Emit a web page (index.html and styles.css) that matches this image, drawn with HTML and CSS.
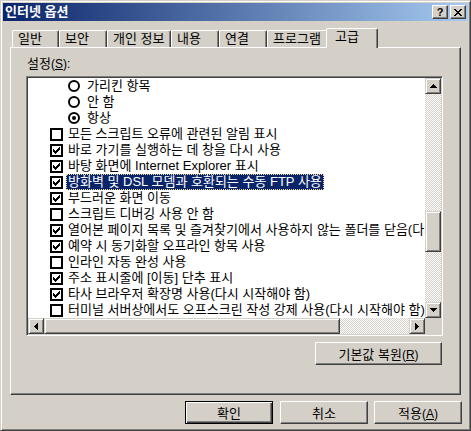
FILE: index.html
```html
<!DOCTYPE html>
<html lang="ko">
<head>
<meta charset="utf-8">
<title>인터넷 옵션</title>
<link rel="stylesheet" href="styles.css">
</head>
<body>
<div class="window">
  <div class="titlebar">
    <span class="title">인터넷 옵션</span>
    <div class="caption-buttons">
      <span class="cap-btn help">?</span>
      <span class="cap-btn close"><svg width="8" height="7" viewBox="0 0 8 7" shape-rendering="crispEdges"><path d="M0 0h2v1h-2zM6 0h2v1h-2zM1 1h2v1h-2zM5 1h2v1h-2zM2 2h4v1h-4zM3 3h2v1h-2zM2 4h4v1h-4zM1 5h2v1h-2zM5 5h2v1h-2zM0 6h2v1h-2zM6 6h2v1h-2z"/></svg></span>
    </div>
  </div>
  <div class="client">
    <div class="tabs">
      <div class="tab t1">일반</div>
      <div class="tab t2">보안</div>
      <div class="tab t3">개인 정보</div>
      <div class="tab t4">내용</div>
      <div class="tab t5">연결</div>
      <div class="tab t6">프로그램</div>
      <div class="tab t7 active">고급</div>
    </div>
    <div class="panel">
      <div class="label">설정<span class="lat">(<u>S</u>):</span></div>
      <div class="listbox">
        <div class="items">
          <div class="row radio-row"><svg class="radio" width="12" height="12" viewBox="0 0 12 12"><circle cx="6" cy="6" r="5" fill="#fff" stroke="#000" stroke-width="2"/></svg><span class="text">가리킨 항목</span></div>
          <div class="row radio-row"><svg class="radio" width="12" height="12" viewBox="0 0 12 12"><circle cx="6" cy="6" r="5" fill="#fff" stroke="#000" stroke-width="2"/></svg><span class="text">안 함</span></div>
          <div class="row radio-row"><svg class="radio" width="12" height="12" viewBox="0 0 12 12"><circle cx="6" cy="6" r="5" fill="#fff" stroke="#000" stroke-width="2"/><circle cx="6" cy="6" r="2" fill="#000"/></svg><span class="text">항상</span></div>
          <div class="row cb-row"><span class="cb"></span><span class="text">모든 스크립트 오류에 관련된 알림 표시</span></div>
          <div class="row cb-row"><span class="cb"><svg width="7" height="7" viewBox="0 0 7 7" shape-rendering="crispEdges"><path d="M0 2h1v3h-1zM1 3h1v3h-1zM2 4h1v3h-1zM3 3h1v3h-1zM4 2h1v3h-1zM5 1h1v3h-1zM6 0h1v3h-1z"/></svg></span><span class="text">바로 가기를 실행하는 데 창을 다시 사용</span></div>
          <div class="row cb-row"><span class="cb"><svg width="7" height="7" viewBox="0 0 7 7" shape-rendering="crispEdges"><path d="M0 2h1v3h-1zM1 3h1v3h-1zM2 4h1v3h-1zM3 3h1v3h-1zM4 2h1v3h-1zM5 1h1v3h-1zM6 0h1v3h-1z"/></svg></span><span class="text">바탕 화면에 Internet Explorer 표시</span></div>
          <div class="row cb-row selected"><span class="cb"><svg width="7" height="7" viewBox="0 0 7 7" shape-rendering="crispEdges"><path d="M0 2h1v3h-1zM1 3h1v3h-1zM2 4h1v3h-1zM3 3h1v3h-1zM4 2h1v3h-1zM5 1h1v3h-1zM6 0h1v3h-1z"/></svg></span><span class="text">방화벽 및 DSL 모뎀과 호환되는 수동 FTP 사용</span></div>
          <div class="row cb-row"><span class="cb"><svg width="7" height="7" viewBox="0 0 7 7" shape-rendering="crispEdges"><path d="M0 2h1v3h-1zM1 3h1v3h-1zM2 4h1v3h-1zM3 3h1v3h-1zM4 2h1v3h-1zM5 1h1v3h-1zM6 0h1v3h-1z"/></svg></span><span class="text">부드러운 화면 이동</span></div>
          <div class="row cb-row"><span class="cb"></span><span class="text">스크립트 디버깅 사용 안 함</span></div>
          <div class="row cb-row"><span class="cb"><svg width="7" height="7" viewBox="0 0 7 7" shape-rendering="crispEdges"><path d="M0 2h1v3h-1zM1 3h1v3h-1zM2 4h1v3h-1zM3 3h1v3h-1zM4 2h1v3h-1zM5 1h1v3h-1zM6 0h1v3h-1z"/></svg></span><span class="text">열어본 페이지 목록 및 즐겨찾기에서 사용하지 않는 폴더를 닫음(다시 시작해야 함)</span></div>
          <div class="row cb-row"><span class="cb"><svg width="7" height="7" viewBox="0 0 7 7" shape-rendering="crispEdges"><path d="M0 2h1v3h-1zM1 3h1v3h-1zM2 4h1v3h-1zM3 3h1v3h-1zM4 2h1v3h-1zM5 1h1v3h-1zM6 0h1v3h-1z"/></svg></span><span class="text">예약 시 동기화할 오프라인 항목 사용</span></div>
          <div class="row cb-row"><span class="cb"></span><span class="text">인라인 자동 완성 사용</span></div>
          <div class="row cb-row"><span class="cb"><svg width="7" height="7" viewBox="0 0 7 7" shape-rendering="crispEdges"><path d="M0 2h1v3h-1zM1 3h1v3h-1zM2 4h1v3h-1zM3 3h1v3h-1zM4 2h1v3h-1zM5 1h1v3h-1zM6 0h1v3h-1z"/></svg></span><span class="text">주소 표시줄에 [이동] 단추 표시</span></div>
          <div class="row cb-row"><span class="cb"><svg width="7" height="7" viewBox="0 0 7 7" shape-rendering="crispEdges"><path d="M0 2h1v3h-1zM1 3h1v3h-1zM2 4h1v3h-1zM3 3h1v3h-1zM4 2h1v3h-1zM5 1h1v3h-1zM6 0h1v3h-1z"/></svg></span><span class="text">타사 브라우저 확장명 사용(다시 시작해야 함)</span></div>
          <div class="row cb-row"><span class="cb"></span><span class="text">터미널 서버상에서도 오프스크린 작성 강제 사용(다시 시작해야 함)</span></div>
        </div>
        <div class="vscroll">
          <span class="sbtn"><svg width="7" height="4" viewBox="0 0 7 4" shape-rendering="crispEdges"><path d="M3 0h1v1h-1zM2 1h3v1h-3zM1 2h5v1h-5zM0 3h7v1h-7z"/></svg></span>
          <div class="track vtrack"><div class="thumb vthumb"></div></div>
          <span class="sbtn"><svg width="7" height="4" viewBox="0 0 7 4" shape-rendering="crispEdges"><path d="M0 0h7v1h-7zM1 1h5v1h-5zM2 2h3v1h-3zM3 3h1v1h-1z"/></svg></span>
        </div>
        <div class="hscroll">
          <span class="sbtn"><svg width="4" height="7" viewBox="0 0 4 7" shape-rendering="crispEdges"><path d="M0 3h1v1h-1zM1 2h1v3h-1zM2 1h1v5h-1zM3 0h1v7h-1z"/></svg></span>
          <div class="track htrack"><div class="thumb hthumb"></div></div>
          <span class="sbtn"><svg width="4" height="7" viewBox="0 0 4 7" shape-rendering="crispEdges"><path d="M0 0h1v7h-1zM1 1h1v5h-1zM2 2h1v3h-1zM3 3h1v1h-1z"/></svg></span>
        </div>
        <div class="corner"></div>
      </div>
      <div class="restore-row"><button class="btn restore">기본값 복원<span class="lat">(<u>R</u>)</span></button></div>
    </div>
    <div class="dialog-buttons">
      <button class="btn dlg default">확인</button>
      <button class="btn dlg">취소</button>
      <button class="btn dlg">적용<span class="lat">(<u>A</u>)</span></button>
    </div>
  </div>
</div>
</body>
</html>
```
FILE: styles.css
```css
* { box-sizing: border-box; }

body {
  margin: 0;
  background: #d4d0c8;
  font-family: "Liberation Sans", "Noto Sans CJK KR", sans-serif;
  font-size: 13px;
  color: #000;
}

.lat { font-size: 12px; }

.window {
  width: 471px;
  height: 431px;
  border: 1px solid;
  border-color: #d4d0c8 #404040 #404040 #d4d0c8;
  box-shadow: inset 1px 1px #fff, inset -1px -1px #808080;
  padding: 2px;
  display: flex;
  flex-direction: column;
  overflow: hidden;
  background: #d4d0c8;
}

.titlebar {
  flex: none;
  height: 18px;
  background: linear-gradient(to right, #0a246a, #a6caf0);
  display: flex;
  align-items: center;
  justify-content: space-between;
  padding: 0 2px;
}

.title {
  color: #fff;
  font-weight: bold;
  line-height: 16px;
}

.caption-buttons {
  display: flex;
  gap: 2px;
}

.cap-btn {
  width: 16px;
  height: 14px;
  background: #d4d0c8;
  border: 1px solid;
  border-color: #fff #404040 #404040 #fff;
  box-shadow: inset -1px -1px #808080;
  display: flex;
  align-items: center;
  justify-content: center;
}

.help {
  font-family: "Liberation Sans", sans-serif;
  font-weight: bold;
  font-size: 11px;
  line-height: 12px;
}

.client {
  flex: 1;
  display: flex;
  flex-direction: column;
  padding: 7px 7px 0 7px;
}

.tabs {
  flex: none;
  display: flex;
  align-items: flex-end;
  height: 20px;
  margin-left: 2px;
  margin-bottom: -1px;
}

.tab {
  flex: none;
  height: 17px;
  margin-bottom: 1px;
  border-top: 1px solid #fff;
  border-left: 1px solid #fff;
  border-right: 1px solid #404040;
  box-shadow: inset -1px 0 #808080;
  border-radius: 2px 2px 0 0;
  padding-left: 5px;
  line-height: 16px;
  white-space: nowrap;
  background: #d4d0c8;
}

.t1 { width: 47px; }
.t2 { width: 48px; }
.t3 { width: 64px; }
.t4 { width: 48px; }
.t5 { width: 48px; }
.t6 { width: 61px; }
.t7 { width: 52px; }

.tab.active {
  height: 20px;
  margin: 0 0 0 -2px;
  padding-left: 8px;
  position: relative;
  z-index: 1;
}

.panel {
  flex: none;
  height: 348px;
  border: 1px solid;
  border-color: #fff #404040 #404040 #fff;
  box-shadow: inset -1px -1px #808080;
  padding: 8px 17px 0 15px;
  display: flex;
  flex-direction: column;
}

.label {
  height: 16px;
  line-height: 16px;
  margin-left: 1px;
}

.listbox {
  margin-top: 4px;
  width: 417px;
  height: 260px;
  border: 1px solid;
  border-color: #808080 #fff #fff #808080;
  box-shadow: inset 1px 1px #404040, inset -1px -1px #d4d0c8;
  padding: 1px;
  background: #fff;
  display: grid;
  grid-template-columns: 397px 16px;
  grid-template-rows: 240px 16px;
}

.items {
  background: #fff;
  overflow: hidden;
}

.row {
  height: 16px;
  display: flex;
  align-items: center;
  white-space: nowrap;
}

.cb-row { padding-left: 22px; }
.radio-row { padding-left: 40px; }

.cb {
  flex: none;
  width: 13px;
  height: 13px;
  border: 2px solid #000;
  background: #fff;
  display: flex;
  align-items: center;
  justify-content: center;
  margin-right: 3px;
}

.radio {
  flex: none;
  margin-right: 5px;
}

.text {
  padding: 0 2px;
  height: 16px;
  line-height: 16px;
}

.selected .text {
  background: #0a246a;
  color: #fff;
  outline: 1px dotted #f5db95;
  outline-offset: -1px;
}

.vscroll {
  display: flex;
  flex-direction: column;
}

.hscroll {
  display: flex;
}

.sbtn, .thumb {
  flex: none;
  width: 16px;
  height: 16px;
  background: #d4d0c8;
  border: 1px solid;
  border-color: #d4d0c8 #404040 #404040 #d4d0c8;
  box-shadow: inset 1px 1px #fff, inset -1px -1px #808080;
  display: flex;
  align-items: center;
  justify-content: center;
}

.track {
  flex: 1;
  background: repeating-conic-gradient(#fff 0 25%, #d4d0c8 0 50%) 0 0 / 2px 2px;
}

.vtrack {
  display: flex;
  flex-direction: column;
  padding-top: 117px;
}

.vthumb { height: 41px; }

.htrack { display: flex; }

.hthumb { width: 296px; }

.corner { background: #d4d0c8; }

.restore-row {
  display: flex;
  justify-content: flex-end;
  margin-top: 6px;
  padding-right: 1px;
}

.btn {
  font: inherit;
  color: #000;
  height: 23px;
  padding: 0;
  background: #d4d0c8;
  border: 1px solid;
  border-color: #fff #404040 #404040 #fff;
  box-shadow: inset -1px -1px #808080;
}

.restore { width: 127px; }

.dialog-buttons {
  display: flex;
  justify-content: flex-end;
  gap: 6px;
  margin-top: 6px;
  margin-right: -1px;
}

.dlg { width: 88px; }

.default {
  border-color: #000;
  box-shadow: inset 1px 1px #fff, inset -1px -1px #404040, inset -2px -2px #808080;
  margin-right: 1px;
}
```
